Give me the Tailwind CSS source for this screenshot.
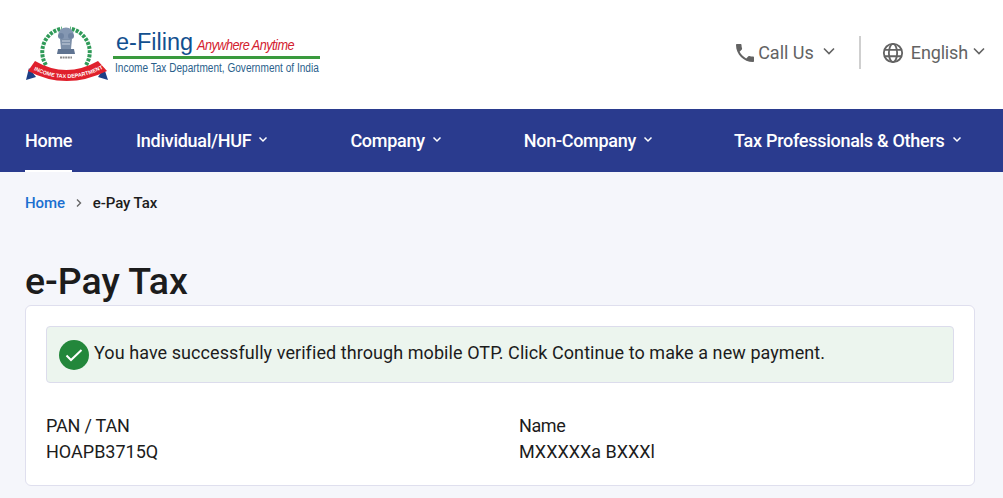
<!DOCTYPE html>
<html lang="en">
<head>
  <meta charset="UTF-8">
  <title>e-Pay Tax</title>
  <script src="https://cdn.jsdelivr.net/npm/@tailwindcss/browser@4"></script>
</head>
<body class="bg-[#f5f6fb] font-['Roboto',sans-serif] text-[#1c1c1c] h-[498px] overflow-hidden">
  <!-- top header -->
  <header class="bg-white h-[109px] flex items-center justify-between pl-[25px] pr-[16px]">
    <div class="flex items-start">
      <svg width="84" height="60" viewBox="0 0 84 60" class="mt-[1px]">
        <!-- wreath -->
        <path d="M21 40A24 24 0 0 1 37 3.500" fill="none" stroke="#2f9a58" stroke-width="4" stroke-dasharray="3 1.200"/>
        <path d="M61 40A24 24 0 0 0 45 3.500" fill="none" stroke="#2f9a58" stroke-width="4" stroke-dasharray="3 1.200"/>
        <!-- emblem -->
        <ellipse cx="41" cy="9" rx="7.500" ry="6.500" fill="#8497b2"/>
        <circle cx="36" cy="11" r="3" fill="#6f84a2"/>
        <circle cx="46" cy="11" r="3" fill="#6f84a2"/>
        <path d="M35 14h12l-1 10H36z" fill="#7c8fa8"/>
        <path d="M37 16h8M37 19h8" stroke="#c9d2df" stroke-width="1"/>
        <path d="M33 24h16l1 5H32z" fill="#5f7390"/>
        <path d="M35 32.500h12" stroke="#8a8a8a" stroke-width="1.800" stroke-dasharray="2 .6"/>
        <!-- ribbon -->
        <path d="M4 43L1 55l10-3z" fill="#1d3f86"/>
        <path d="M79 43l4 12-10-3z" fill="#1d3f86"/>
        <path d="M10 36Q41 54 73 36L82 46Q41 66 3 46Z" fill="#e0202c"/>
        <path id="rib" d="M7 44Q41 62 77 44" fill="none"/>
        <text font-family="Liberation Sans, sans-serif" font-size="5.400" font-weight="700" fill="#fff"><textPath href="#rib" startOffset="2">INCOME TAX DEPARTMENT</textPath></text>
      </svg>
      <div class="ml-[4px] w-[207px] mt-[5px] font-['Liberation_Sans',sans-serif]">
        <div class="flex items-baseline h-[26px] pl-[3px]">
          <span class="text-[23.500px] leading-[26px] text-[#12508f]">e-Filing</span>
          <span class="ml-[4px] text-[14px] italic text-[#d3202e] tracking-[-0.6px] scale-x-[0.91] origin-left whitespace-nowrap">Anywhere Anytime</span>
        </div>
        <div class="h-[3px] bg-[#3a9a3e] mt-[1px]"></div>
        <div class="text-[12px] leading-[14px] mt-[2px] ml-[2px] text-[#2a5f8c] scale-x-[0.84] origin-left whitespace-nowrap">Income Tax Department, Government of India</div>
      </div>
    </div>
    <div class="flex items-center text-[#636363] text-[18px] pb-[4px]">
      <svg width="24" height="24" viewBox="0 0 24 24" fill="#636363" class="ml-[-1px]"><path d="M6.620 10.790c1.440 2.830 3.760 5.140 6.590 6.590l2.200-2.200c.27-.27.67-.36 1.020-.24 1.120.37 2.330.57 3.570.57.55 0 1 .45 1 1V20c0 .55-.45 1-1 1C10.610 21 3 13.390 3 4c0-.55.45-1 1-1h3.500c.55 0 1 .45 1 1 0 1.250.2 2.450.57 3.570.11.35.03.74-.25 1.020z"/></svg>
      <span class="ml-[1px]">Call Us</span>
      <svg width="16" height="16" viewBox="0 0 16 16" fill="none" stroke="#636363" stroke-width="1.600" class="ml-[7px] mt-[-3px]"><path d="M3 5.500l5 5 5-5"/></svg>
      <div class="w-[2px] h-[33px] bg-[#cfcfcf] ml-[22px] mr-[21px]"></div>
      <svg width="22" height="22" viewBox="0 0 24 24" fill="none" stroke="#636363" stroke-width="2"><circle cx="12" cy="12" r="10"/><ellipse cx="12" cy="12" rx="4.500" ry="10"/><path d="M2.600 8.500h18.800M2.600 15.500h18.800"/></svg>
      <span class="ml-[7px] tracking-[-0.15px]">English</span>
      <svg width="16" height="16" viewBox="0 0 16 16" fill="none" stroke="#636363" stroke-width="1.600" class="ml-[3px] mt-[-3px]"><path d="M3 5.500l5 5 5-5"/></svg>
    </div>
  </header>

  <!-- main nav -->
  <nav class="bg-[#2a3b8e] h-[63px] pl-[25px] flex text-white text-[18px] font-medium tracking-[-0.28px]">
    <a class="w-[111px] h-full">
      <span class="h-full inline-flex items-center border-b-[2px] border-white pt-[2px]">Home</span>
    </a>
    <a class="flex items-center">Individual/HUF
      <svg width="12" height="12" viewBox="0 0 12 12" fill="none" stroke="#fff" stroke-width="1.500" class="ml-[6px] mt-[-3px]"><path d="M2.500 4.500L6 8l3.500-3.500"/></svg>
    </a>
    <a class="flex items-center ml-[81px]">Company
      <svg width="12" height="12" viewBox="0 0 12 12" fill="none" stroke="#fff" stroke-width="1.500" class="ml-[6px] mt-[-3px]"><path d="M2.500 4.500L6 8l3.500-3.500"/></svg>
    </a>
    <a class="flex items-center ml-[81px]">Non-Company
      <svg width="12" height="12" viewBox="0 0 12 12" fill="none" stroke="#fff" stroke-width="1.500" class="ml-[6px] mt-[-3px]"><path d="M2.500 4.500L6 8l3.500-3.500"/></svg>
    </a>
    <a class="flex items-center ml-[80px]">Tax Professionals &amp; Others
      <svg width="12" height="12" viewBox="0 0 12 12" fill="none" stroke="#fff" stroke-width="1.500" class="ml-[6px] mt-[-3px]"><path d="M2.500 4.500L6 8l3.500-3.500"/></svg>
    </a>
  </nav>

  <main class="pl-[25px] pr-[28px]">
    <!-- breadcrumb -->
    <div class="flex items-center h-[20px] mt-[21px] text-[15px] font-medium tracking-[-0.1px]">
      <a class="text-[#1a6fd0]">Home</a>
      <svg width="10" height="10" viewBox="0 0 10 10" fill="none" stroke="#666" stroke-width="1.400" class="ml-[9px] mr-[9px]"><path d="M3 1.500L6.500 5 3 8.500"/></svg>
      <span>e-Pay Tax</span>
    </div>
    <h1 class="text-[37.500px] leading-[44px] font-medium mt-[46px] mb-[2px]">e-Pay Tax</h1>

    <!-- card -->
    <section class="bg-white border border-[#dfdfee] rounded-[6px] h-[181px] pt-[20px] px-[20px] text-[18px]">
      <div class="h-[57px] bg-[#ecf5ee] border border-[#dcdcec] rounded-[4px] flex items-center pl-[12px]">
        <span class="w-[30px] h-[30px] rounded-full bg-[#23873b] flex items-center justify-center shrink-0">
          <svg width="20" height="20" viewBox="0 0 20 20" fill="none" stroke="#fff" stroke-width="2"><path d="M2.500 10.500l4.500 4.500L17.500 5"/></svg>
        </span>
        <p class="ml-[5px] tracking-[0.07px] mt-[-5px]">You have successfully verified through mobile OTP. Click Continue to make a new payment.</p>
      </div>
      <div class="grid grid-cols-[473px_1fr] mt-[30px] leading-[26px]">
        <div>
          <div class="tracking-[-0.2px]">PAN / TAN</div>
          <div>HOAPB3715Q</div>
        </div>
        <div>
          <div class="tracking-[-0.4px]">Name</div>
          <div>MXXXXXa BXXXl</div>
        </div>
      </div>
    </section>
  </main>
</body>
</html>
